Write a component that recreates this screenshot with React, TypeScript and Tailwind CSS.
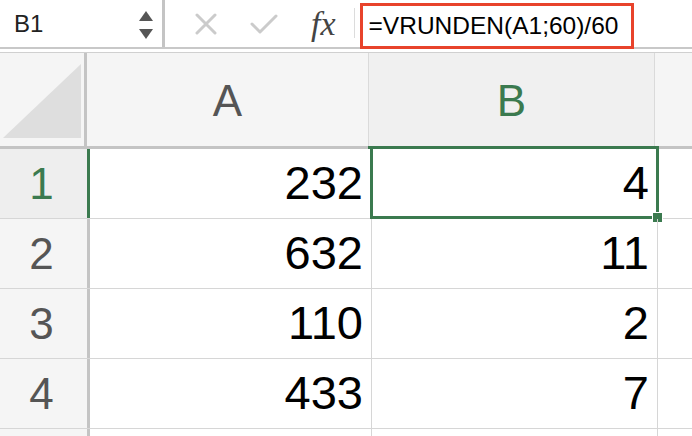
const rows = [
  { n: 1, a: '232', b: '4' },
  { n: 2, a: '632', b: '11' },
  { n: 3, a: '110', b: '2' },
  { n: 4, a: '433', b: '7' },
];

function Toolbar() {
  return (
    <div className="flex h-[49px] items-stretch border-b-2 border-[#c8c8c8] bg-white">
      <div className="flex w-[162px] items-center justify-between pl-[14px] pr-[8px]">
        <span className="text-[24px] leading-none text-[#222]">B1</span>
        <svg width="16" height="30" viewBox="0 0 16 30" className="mt-[2px]">
          <path d="M8 1 L15 11 L1 11 Z" fill="#555" />
          <path d="M1 19 L15 19 L8 29 Z" fill="#555" />
        </svg>
      </div>
      <div className="w-[3px] bg-[#c4c4c4]" />
      <div className="flex items-center gap-[33px] pl-[30px]">
        <svg width="22" height="22" viewBox="0 0 22 22">
          <path d="M2 2 L20 20 M20 2 L2 20" stroke="#cbcbcb" strokeWidth="3" strokeLinecap="round" />
        </svg>
        <svg width="28" height="22" viewBox="0 0 28 22">
          <path d="M2 11 L10 19 L26 3" stroke="#cbcbcb" strokeWidth="3" fill="none" strokeLinecap="round" strokeLinejoin="round" />
        </svg>
        <span className="font-['Liberation_Serif',serif] text-[34px] italic leading-none text-[#444]">
          fx
        </span>
      </div>
      <div className="ml-[18px] mt-[8px] h-[30px] w-[1px] bg-[#dcdcdc]" />
      <div className="ml-[5px] mt-[3px] flex h-[46px] w-[274px] items-center border-[3px] border-[#e8432b] pl-[6px]">
        <span className="text-[24.5px] leading-none text-black">=VRUNDEN(A1;60)/60</span>
      </div>
    </div>
  );
}

function HeaderRow() {
  return (
    <div className="flex h-[97px] border-b-[3px] border-t border-[#c4c4c4] border-t-[#d0d0d0] bg-[#f5f5f5]">
      <div className="flex w-[87px] items-center justify-center border-r-[3px] border-[#c4c4c4]">
        <svg width="84" height="84" viewBox="0 0 84 84" className="mt-[1px]">
          <path d="M81 6 L81 80 L3 80 Z" fill="#dedede" />
        </svg>
      </div>
      <div className="flex w-[282px] items-center justify-center border-r border-[#dadada] pt-[2px] text-[44px] text-[#555]">
        A
      </div>
      <div className="relative flex w-[286px] items-center justify-center border-r border-[#dadada] bg-[#f0f0f0] pt-[2px] text-[44px] text-[#3b7a4f]">
        B
        <div className="absolute -bottom-[3px] -left-[1px] -right-[1px] h-[3px] bg-[#3b7a4f]" />
      </div>
      <div className="flex-1" />
    </div>
  );
}

function DataRow({ n, a, b }: { n: number; a: string; b: string }) {
  const selected = n === 1;
  return (
    <div className="flex h-[70px] border-b border-[#d6d6d6]">
      <div
        className={
          selected
            ? 'flex w-[90px] items-center justify-center border-r-[3px] border-[#3b7a4f] bg-[#eeeeee] pr-[4px] text-[44px] text-[#3b7a4f]'
            : 'flex w-[90px] items-center justify-center border-r-[3px] border-[#c4c4c4] bg-[#f5f5f5] pr-[4px] text-[44px] text-[#555]'
        }
      >
        {n}
      </div>
      <div className="flex w-[282px] items-center justify-end border-r border-[#d6d6d6] pr-[8px] text-[47px] text-black">
        {a}
      </div>
      <div className="relative flex w-[286px] items-center justify-end border-r border-[#d6d6d6] pr-[8px] text-[47px] text-black">
        {b}
        {selected && (
          <>
            <div className="absolute -left-[2px] -right-[2px] -top-[3px] -bottom-[1px] border-[3px] border-[#3b7a4f]" />
            <div className="absolute -bottom-[5px] -right-[6px] h-[11px] w-[11px] border border-white bg-[#3b7a4f]" />
          </>
        )}
      </div>
      <div className="flex-1" />
    </div>
  );
}

export default function App() {
  return (
    <div className="h-[436px] w-[692px] overflow-hidden bg-white font-['Liberation_Sans',Arial,sans-serif]">
      <Toolbar />
      <div className="h-[3px]" />
      <HeaderRow />
      {rows.map((r) => (
        <DataRow key={r.n} {...r} />
      ))}
      <div className="flex h-[20px]">
        <div className="w-[90px] border-r-[3px] border-[#c4c4c4] bg-[#f5f5f5]" />
        <div className="w-[282px] border-r border-[#d6d6d6]" />
        <div className="w-[286px] border-r border-[#d6d6d6]" />
      </div>
    </div>
  );
}
